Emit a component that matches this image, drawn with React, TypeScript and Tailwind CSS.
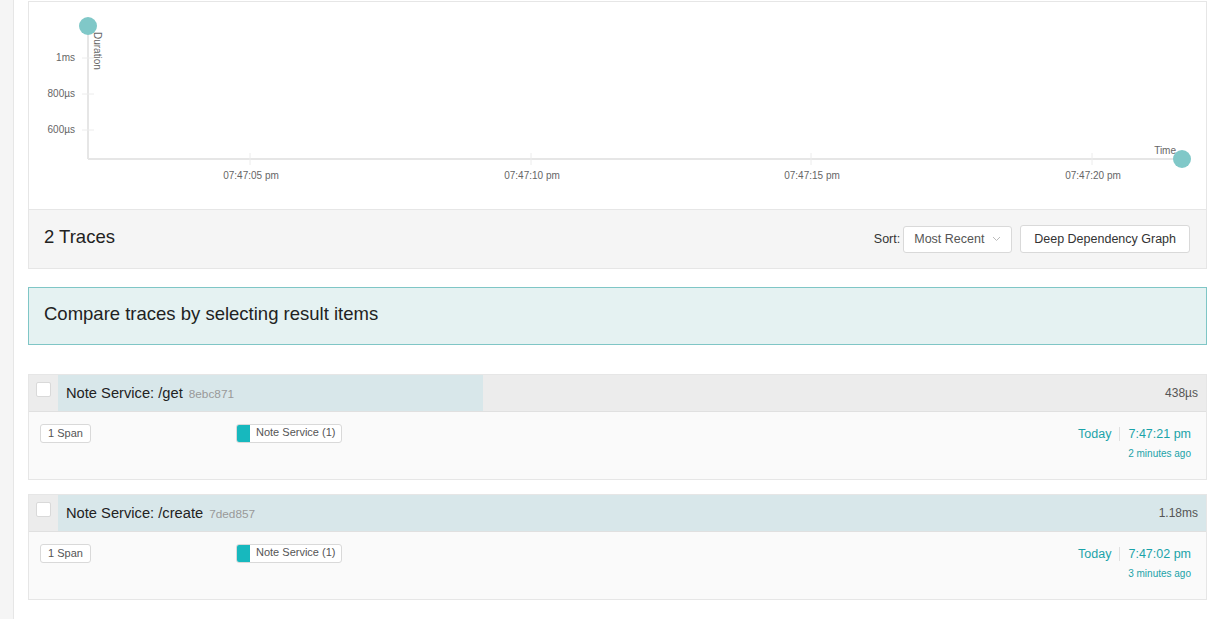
import React from "react";

const FONT = { fontFamily: '"Liberation Sans", Arial, sans-serif' };

type Trace = {
  name: string;
  id: string;
  duration: string;
  ratio: number;
  time: string;
  ago: string;
};

const TRACES: Trace[] = [
  { name: "Note Service: /get", id: "8ebc871", duration: "438µs", ratio: 0.37, time: "7:47:21 pm", ago: "2 minutes ago" },
  { name: "Note Service: /create", id: "7ded857", duration: "1.18ms", ratio: 1, time: "7:47:02 pm", ago: "3 minutes ago" },
];

function ScatterChart() {
  const yTicks = [
    { y: 56, label: "1ms" },
    { y: 92, label: "800µs" },
    { y: 128, label: "600µs" },
  ];
  const xTicks = [
    { x: 221, label: "07:47:05 pm" },
    { x: 502, label: "07:47:10 pm" },
    { x: 782, label: "07:47:15 pm" },
    { x: 1063, label: "07:47:20 pm" },
  ];
  return (
    <svg width="1177" height="207" className="block" style={FONT}>
      <line x1="59" y1="24" x2="59" y2="157" stroke="#e6e6e6" strokeWidth="2" />
      <line x1="59" y1="157" x2="1153" y2="157" stroke="#e6e6e6" strokeWidth="2" />
      {yTicks.map((t) => (
        <g key={t.label}>
          <line x1="53" y1={t.y} x2="65" y2={t.y} stroke="#ececec" strokeWidth="1" />
          <text x="46" y={t.y + 3} textAnchor="end" fontSize="10" fill="#666">
            {t.label}
          </text>
        </g>
      ))}
      {xTicks.map((t) => (
        <g key={t.label}>
          <line x1={t.x} y1="151" x2={t.x} y2="163" stroke="#ececec" strokeWidth="1" />
          <text x={t.x + 1} y="177" textAnchor="middle" fontSize="10" fill="#666">
            {t.label}
          </text>
        </g>
      ))}
      <text x="0" y="0" fontSize="10" fill="#666" transform="translate(65 30) rotate(90)">
        Duration
      </text>
      <text x="1147" y="152" textAnchor="end" fontSize="10" fill="#666">
        Time
      </text>
      <circle cx="59" cy="24" r="9" fill="#80c8c8" />
      <circle cx="1153" cy="157" r="9" fill="#80c8c8" />
    </svg>
  );
}

function Tag({ children, color }: { children: React.ReactNode; color?: string }) {
  return (
    <div className="flex h-[19px] items-stretch overflow-hidden rounded-[3px] border border-[#d9d9d9] bg-white text-[11px] text-[#555]">
      {color && <span className="w-[13px]" style={{ background: color }} />}
      <span className={color ? "px-[6px] leading-[15px]" : "px-[7px] leading-[17px]"}>{children}</span>
    </div>
  );
}

function TraceItem({ t }: { t: Trace }) {
  return (
    <div className="border border-[#e6e6e6]" style={FONT}>
      <div className="relative flex h-[37px] items-center border-b border-[#e0e0e0] bg-[#ececec]">
        <div className="flex h-full w-[29px] shrink-0 items-center justify-center">
          <span className="mt-[-7px] block h-[15px] w-[15px] rounded-[2px] border border-[#d9d9d9] bg-white" />
        </div>
        <div className="relative h-full flex-1">
          <div className="absolute inset-y-0 left-0 bg-[#d8e7ea]" style={{ width: `${t.ratio * 100}%` }} />
          <div className="relative flex h-full items-center justify-between pl-[8px] pr-[8px]">
            <div className="flex items-baseline gap-[6px]">
              <span className="text-[14.7px] text-[#222]">{t.name}</span>
              <span className="text-[11.8px] text-[#999]">{t.id}</span>
            </div>
            <span className="text-[12px] text-[#555]">{t.duration}</span>
          </div>
        </div>
      </div>
      <div className="flex h-[67px] justify-between bg-[#fafafa] pl-[11px] pr-[15px] pt-[12px]">
        <div className="flex items-start">
          <div className="flex w-[196px] items-start">
            <Tag>1 Span</Tag>
          </div>
          <div className="flex items-start">
            <Tag color="#17b8be">Note Service (1)</Tag>
          </div>
        </div>
        <div className="flex flex-col items-end">
          <div className="flex items-center text-[12.5px] leading-[20px] text-[#1aa3a9]">
            <span>Today</span>
            <span className="mx-[8px] h-[14px] w-px bg-[#e0e0e0]" />
            <span>{t.time}</span>
          </div>
          <span className="mt-[2px] text-[10px] text-[#1aa3a9]">{t.ago}</span>
        </div>
      </div>
    </div>
  );
}

export default function App() {
  return (
    <div className="flex h-[619px] w-[1221px] overflow-hidden bg-white" style={FONT}>
      <div className="w-[14px] shrink-0 border-r border-[#e6e6e6] bg-[#f5f5f5]" />
      <div className="flex-1 pl-[14px] pr-[14px] pt-[1px]">
        <div className="border border-[#e6e6e6]">
          <div className="bg-white">
            <ScatterChart />
          </div>
          <div className="flex h-[59px] items-center justify-between border-t border-[#e6e6e6] bg-[#f5f5f5] pl-[15px] pr-[16px]">
            <span className="mt-[-4px] text-[18.5px] text-[#222]">2 Traces</span>
            <div className="flex items-center">
              <span className="mr-[3px] text-[12.5px] text-[#333]">Sort:</span>
              <div className="flex h-[27px] w-[109px] items-center justify-between rounded-[3px] border border-[#d9d9d9] bg-white pl-[10px] pr-[10px]">
                <span className="text-[12.5px] text-[#555]">Most Recent</span>
                <svg width="9" height="6" viewBox="0 0 9 6">
                  <path d="M1 1 L4.5 4.5 L8 1" fill="none" stroke="#bbb" strokeWidth="1" />
                </svg>
              </div>
              <button className="ml-[8px] h-[28px] rounded-[3px] border border-[#d9d9d9] bg-white px-[13px] text-[12.5px] text-[#333]">
                Deep Dependency Graph
              </button>
            </div>
          </div>
        </div>
        <div className="mt-[18px] flex h-[58px] items-center border border-[#7fc6c6] bg-[#e5f2f2] pl-[15px]">
          <span className="mt-[-4px] text-[18.5px] text-[#222]">Compare traces by selecting result items</span>
        </div>
        <div className="mt-[29px] flex flex-col gap-[14px]">
          {TRACES.map((t) => (
            <TraceItem key={t.id} t={t} />
          ))}
        </div>
      </div>
    </div>
  );
}
